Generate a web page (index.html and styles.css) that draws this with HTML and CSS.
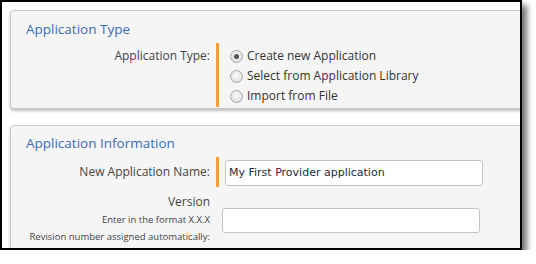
FILE: index.html
```html
<!DOCTYPE html>
<html>
<head>
<meta charset="utf-8">
<title>Application</title>
<link rel="stylesheet" href="styles.css">
</head>
<body>
    <div id="frame">
        <div class="panel first">
            <h2 class="title">Application Type</h2>
            <div class="row">
                <div class="label">Application Type:</div>
                <div class="field required">
                    <div class="option"><span class="radio checked"></span>Create new Application</div>
                    <div class="option"><span class="radio"></span>Select from Application Library</div>
                    <div class="option"><span class="radio"></span>Import from File</div>
                </div>
            </div>
        </div>

        <div class="panel second">
            <h2 class="title">Application Information</h2>
            <div class="row">
                <div class="label name">New Application Name:</div>
                <div class="field required">
                    <input type="text" class="textbox" value="My First Provider application" />
                </div>
            </div>
            <div class="row version">
                <div class="label">
                    <div class="big">Version</div>
                    <div class="small">Enter in the format X.X.X</div>
                    <div class="small">Revision number assigned automatically:</div>
                </div>
                <div class="field plain">
                    <input type="text" class="textbox" value="" />
                </div>
            </div>
        </div>
    </div>
</body>
</html>
```

FILE: styles.css
```css
body {
    margin: 0;
    background: white;
    font-family: "Open Sans", "Liberation Sans", sans-serif;
}
#frame {
    width: 518px;
    height: 238px;
    border: 2px solid black;
    background: white;
    overflow: hidden;
    box-shadow: 5px 5px 6px rgba(0,0,0,0.55);
    padding-top: 8px;
    box-sizing: content-box;
}
.panel {
    width: 540px;
    margin-left: 8px;
    background: #f5f5f5;
    border: 1px solid #c9c9c9;
    border-radius: 4px;
    box-shadow: 0 2px 3px rgba(0,0,0,0.25);
}
.first {
    height: 97px;
    margin-bottom: 16px;
}
.second {
    height: 140px;
}
.title {
    margin: 0;
    padding: 8px 0 0 15px;
    font-size: 13.5px;
    font-weight: normal;
    color: #3a6cb8;
    line-height: 20px;
    height: 24px;
}
.row {
    display: grid;
    grid-template-columns: 205px 1fr;
}
.label {
    text-align: right;
    padding-right: 6px;
    color: #444;
    font-size: 12px;
    line-height: 20px;
}
.first .label {
    padding-top: 3px;
}
.field.required {
    border-left: 3px solid #f0a030;
}
.first .field {
    padding: 3px 0 1px 11px;
    height: 60px;
}
.option {
    font-size: 12px;
    color: #333;
    line-height: 20px;
    height: 20px;
    display: flex;
    align-items: center;
}
.radio {
    display: inline-block;
    width: 11px;
    height: 11px;
    border: 1px solid #a8a8a8;
    border-radius: 50%;
    background: radial-gradient(circle at 50% 40%, #fafafa, #d8d8d8);
    margin-right: 4px;
    position: relative;
}
.radio.checked::after {
    content: "";
    position: absolute;
    left: 3px;
    top: 3px;
    width: 5px;
    height: 5px;
    border-radius: 50%;
    background: #555;
}
.second .title {
    padding-top: 7px;
}
.label.name {
    padding-top: 5px;
}
.second .required {
    padding: 2px 0 2px 6px;
    height: 26px;
}
.textbox {
    box-sizing: border-box;
    width: 258px;
    height: 26px;
    border: 1px solid #c4c4c4;
    border-radius: 3px;
    background: white;
    font-family: "DejaVu Sans", Verdana, sans-serif;
    font-size: 11px;
    color: #1c2a44;
    padding: 0 3px;
    margin: 0;
}
.row.version {
    margin-top: 6px;
}
.big {
    font-size: 12px;
    line-height: 18px;
}
.small {
    font-size: 9.5px;
    line-height: 17px;
}
.small.hint {
    font-size: 9px;
}
.field.plain {
    padding: 14px 0 0 6px;
}
.plain .textbox {
    height: 25px;
}
```
